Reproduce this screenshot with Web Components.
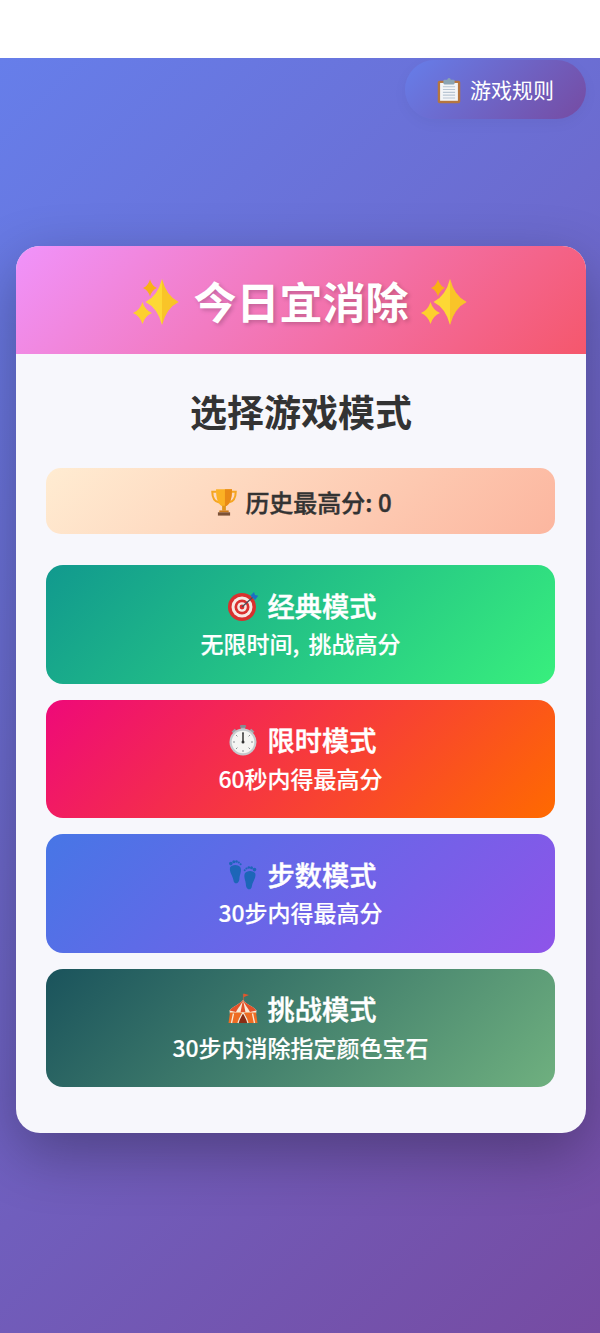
<!DOCTYPE html>
<html lang="zh-CN"><head><meta charset="utf-8"><title>今日宜消除</title>
<style>
html,body{margin:0;padding:0;background:#fff}
body{font-family:"Noto Sans CJK SC","Noto Sans",sans-serif}
</style></head><body>
<game-app>
  <rules-button slot="action"><app-icon name="clipboard" size="30"></app-icon>游戏规则</rules-button>
  <game-card>
    <app-icon slot="title-before" name="sparkles" w="49" h="46"></app-icon>
    <span slot="title">今日宜消除</span>
    <app-icon slot="title-after" name="sparkles" w="49" h="46"></app-icon>
    <span slot="subtitle">选择游戏模式</span>
    <score-box><app-icon name="trophy" size="30"></app-icon>历史最高分: 0</score-box>
    <mode-button kind="classic"><app-icon slot="icon" name="target" size="32"></app-icon><span slot="title">经典模式</span>无限时间, 挑战高分</mode-button>
    <mode-button kind="timed"><app-icon slot="icon" name="stopwatch" size="32"></app-icon><span slot="title">限时模式</span>60秒内得最高分</mode-button>
    <mode-button kind="steps"><app-icon slot="icon" name="feet" size="32"></app-icon><span slot="title">步数模式</span>30步内得最高分</mode-button>
    <mode-button kind="challenge"><app-icon slot="icon" name="tent" size="32"></app-icon><span slot="title">挑战模式</span>30步内消除指定颜色宝石</mode-button>
  </game-card>
</game-app>
<script>
const star=(cx,cy,hw,hh,fill)=>{const a=hw*.26,b=hh*.26;return `<path d="M${cx} ${cy-hh}Q${cx+a} ${cy-b} ${cx+hw} ${cy}Q${cx+a} ${cy+b} ${cx} ${cy+hh}Q${cx-a} ${cy+b} ${cx-hw} ${cy}Q${cx-a} ${cy-b} ${cx} ${cy-hh}Z" fill="${fill}"/>`;};
const ICONS={
clipboard:`<rect x="4" y="6" width="24" height="24" rx="2" fill="#b5763f"/><rect x="6.500" y="8.500" width="19" height="19" fill="#f3f5f7"/><g stroke="#b9c6d3" stroke-width="1.200"><path d="M9.500 12.500h13M9.500 15.500h13M9.500 18.500h13M9.500 21.500h13M9.500 24.500h13"/></g><rect x="10" y="5" width="12" height="5" rx="1.200" fill="#8aa4b3"/><circle cx="16" cy="5" r="1.800" fill="#8aa4b3"/>`,
sparkles:star(29,23,16.500,23,"#fdd835")+`<path d="M29 0Q33.300 17 45.500 23Q33.300 29 29 46Z" fill="#f5b01c" opacity=".5"/>`+star(17,9,7,8.500,"#f9b115")+star(9.500,34,9.500,11,"#fdd02e"),
trophy:`<path d="M8 5H3.500C3.500 11 5 15.500 11 16.500M24 5h4.500C28.500 11 27 15.500 21 16.500" fill="none" stroke="#f5a623" stroke-width="2.200"/><path d="M7.500 2.500h17C24.500 13 22.500 18 18 20.500h-4C9.500 18 7.500 13 7.500 2.500Z" fill="#fbb124"/><path d="M17 2.500h7.500C24.500 13 22.500 18 18 20.500h-1Z" fill="#e98a16"/><rect x="14" y="20" width="4" height="5" fill="#e0951c"/><path d="M11 25h10v2H11Z" fill="#ca7a1a"/><rect x="9.500" y="27" width="13" height="3.500" fill="#7b5137"/>`,
target:`<circle cx="15" cy="17" r="14" fill="#d9302e"/><circle cx="15" cy="17" r="10.500" fill="#f6e9e4"/><circle cx="15" cy="17" r="7.500" fill="#d9302e"/><circle cx="15" cy="17" r="4.800" fill="#f6e9e4"/><circle cx="15" cy="17" r="2.400" fill="#d9302e"/><path d="M15 17 26 7" stroke="#47505a" stroke-width="1.300"/><path d="M23.500 5.500 27 2l1 3 3.200.7L28 10Z" fill="#1c6fc4"/>`,
stopwatch:`<path d="m23.500 5.500 3 3" stroke="#9aa0a6" stroke-width="2.400"/><path d="m8.500 5.500-3 3" stroke="#9aa0a6" stroke-width="2.400"/><rect x="14" y="3" width="4" height="4" fill="#a7adb3"/><rect x="13" y="1" width="6" height="2.800" rx="1" fill="#858b91"/><circle cx="16" cy="18" r="13.500" fill="#c4c9cc"/><circle cx="16" cy="18" r="11.300" fill="#f5f5f3"/><g stroke="#8b8f93" stroke-width="1"><path d="M16 8v2M16 26v2M6 18h2M24 18h2M9 11l1.400 1.400M23 11l-1.400 1.400M9 25l1.400-1.400M23 25l-1.400-1.400"/></g><path d="M16 18V8.500" stroke="#333" stroke-width="1.500"/><circle cx="16" cy="18" r="1.500" fill="#333"/>`,
feet:`<g fill="#1d66b8"><path d="M3 8.500C4.500 5 12 5 13.500 8.500 14.800 12 13 15 12.500 18.500 12.300 20 12.500 22 11 23.500 9 25.300 6.800 24 6.500 21.500 6 17 2 13 3 8.500Z"/><circle cx="3.800" cy="4.600" r="1.800"/><circle cx="6.800" cy="2.700" r="1.500"/><circle cx="9.500" cy="2.500" r="1.300"/><circle cx="11.800" cy="3.500" r="1.100"/><circle cx="13.600" cy="5.300" r="1"/><path d="M17.800 14.500C19.300 11 26.800 11 28.300 14.500 29.300 19 25.300 23 24.800 27.500 24.500 30 22.300 31.300 20.300 29.500 18.800 28 19 26 18.800 24.500 18.300 21 16.500 18 17.800 14.500Z"/><circle cx="27.500" cy="10.600" r="1.800"/><circle cx="24.500" cy="8.700" r="1.500"/><circle cx="21.800" cy="8.500" r="1.300"/><circle cx="19.500" cy="9.500" r="1.100"/><circle cx="17.700" cy="11.300" r="1"/></g>`,
tent:`<path d="M16.500 1v7" stroke="#9a6a4f" stroke-width="1.200"/><path d="M16.500 .500l5.500 1.600-5.500 2.200Z" fill="#e2562b"/><path d="M16 7C12 12 6 13 2.500 17.500l.5 4h26l.5-4C26 13 20 12 16 7Z" fill="#f6ecd9"/><path d="M16 7C14.500 12 11 14.500 9 19l-6.500-1.500C6 13 12 12 16 7ZM16 7c1.500 5 5 7.500 7 12l6.500-1.500C26 13 20 12 16 7ZM16 7c-.8 4-1.800 8-2.400 12h4.800C17.800 15 16.800 11 16 7Z" fill="#e2522a"/><path d="M3 19.500h26l1.500 10.500H19.500c-1-3.500-2-6.500-3.500-9-1.500 2.500-2.500 5.500-3.500 9H1.500Z" fill="#ee6c23"/><path d="M16 19.500c-3.500 3-4.500 7.500-5 10.500h10c-.5-3-1.500-7.500-5-10.500Z" fill="#8a2d15"/><path d="M6.500 20.500l-2 9.500M25.500 20.500l2 9.500M16 19.500c-2 3-4 7-5 10.500M16 19.500c2 3 4 7 5 10.500" stroke="#f6ecd9" stroke-width="1.300" fill="none"/>`
};
function def(name,css,html,extra){
  customElements.define(name,class extends HTMLElement{
    constructor(){super();this.attachShadow({mode:"open"}).innerHTML=`<style>${css}</style>${html}`;}
    connectedCallback(){extra&&extra(this);}
  });
}
def("app-icon",":host{display:inline-flex;flex:none}svg{display:block}","<span></span>",el=>{
  const s=el.getAttribute("size"),n=el.getAttribute("name");
  const w=el.getAttribute("w")||s,h=el.getAttribute("h")||s;
  const vb=n==="sparkles"?"0 0 49 46":"0 0 32 32";
  el.shadowRoot.querySelector("span").innerHTML=`<svg xmlns="http://www.w3.org/2000/svg" width="${w}" height="${h}" viewBox="${vb}">${ICONS[n]}</svg>`;
});
def("game-app",`
:host{display:flex;flex-direction:column;width:600px;height:1333px;overflow:hidden}
.top{height:58px;flex:none;background:#fff}
main{flex:1;position:relative;background:linear-gradient(135deg,#667eea 0%,#764ba2 100%);padding:188px 14px 0 16px;box-sizing:border-box}
.act{position:absolute;top:2px;right:14px}
`,`<div class="top"></div><main><div class="act"><slot name="action"></slot></div><slot></slot></main>`);
def("rules-button",`
:host{display:flex;align-items:center;justify-content:center;gap:6px;width:181px;height:59px;box-sizing:border-box;border-radius:30px;padding-right:3px;background:linear-gradient(135deg,#667eea 0%,#764ba2 100%);color:#fff;font-size:21px;line-height:1;box-shadow:0 4px 15px rgba(0,0,0,.04)}
`,`<slot></slot>`);
def("game-card",`
:host{display:block;width:570px;height:887px;border-radius:24px;background:#f7f7fc;box-shadow:0 20px 60px rgba(0,0,0,.3);overflow:hidden}
header{height:108px;display:flex;align-items:center;justify-content:center;gap:12px;background:linear-gradient(135deg,#f093fb 0%,#f5576c 100%);color:#fff;font-size:43px;font-weight:700;text-shadow:2px 2px 4px rgba(0,0,0,.2);line-height:1;box-sizing:border-box}
::slotted(app-icon){margin-top:4px}
h2{margin:0;height:114px;display:flex;align-items:center;justify-content:center;font-size:37px;font-weight:700;color:#333;line-height:1}
.body{padding:0 31px 0 30px;display:flex;flex-direction:column;gap:16px}
`,`<header><slot name="title-before"></slot><slot name="title"></slot><slot name="title-after"></slot></header>
<h2><slot name="subtitle"></slot></h2><div class="body"><slot></slot></div>`);
def("score-box",`
:host{display:flex;align-items:center;justify-content:center;gap:6px;height:66px;padding-top:1px;box-sizing:border-box;margin-bottom:15px;border-radius:15px;background:linear-gradient(135deg,#ffecd2 0%,#fcb69f 100%);color:#333;font-size:24px;font-weight:500;-webkit-text-stroke:.4px #333;line-height:1}
`,`<slot></slot>`);
const grads={classic:"#11998e,#38ef7d",timed:"#ee0979,#ff6a00",steps:"#4776e6,#8e54e9",challenge:"#1a535c,#6fb07f"};
def("mode-button",`
:host{display:flex;flex-direction:column;align-items:center;justify-content:center;height:118.500px;box-sizing:border-box;padding-bottom:4px;border-radius:17px;color:#fff;font-size:23px;font-weight:500;word-spacing:4px;line-height:1;-webkit-text-stroke:.15px #fff}
.t{display:flex;align-items:center;gap:9px;font-size:27.200px;font-weight:500;margin-bottom:10.500px;margin-left:2px;-webkit-text-stroke:.45px #fff}
`,`<div class="t"><slot name="icon"></slot><slot name="title"></slot></div><div class="d"><slot></slot></div>`,el=>{
  el.style.background=`linear-gradient(135deg,${grads[el.getAttribute("kind")].replace(","," 0%,")} 100%)`;
});
</script>
</body></html>
